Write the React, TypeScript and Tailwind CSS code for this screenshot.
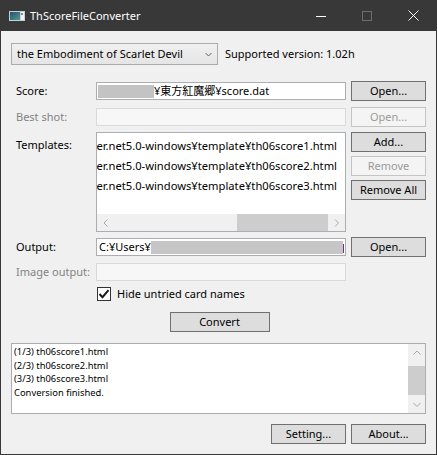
import React from "react";

type BtnProps = { children: React.ReactNode; disabled?: boolean; wide?: boolean };

function Btn({ children, disabled = false, wide = false }: BtnProps) {
  return (
    <div
      className={
        (wide ? "w-[100px] " : "w-[75px] ") +
        "h-[20px] shrink-0 flex items-center justify-center border " +
        (disabled
          ? "border-[#c4c4c4] bg-[#f4f4f4] text-[#9a9a9a]"
          : "border-[#707070] bg-[#dddddd] text-black")
      }
    >
      {children}
    </div>
  );
}

function Label({ children, disabled = false }: { children: React.ReactNode; disabled?: boolean }) {
  return (
    <div className={"w-[85px] shrink-0 pl-[5px] whitespace-nowrap " + (disabled ? "text-[#838383]" : "text-black")}>
      {children}
    </div>
  );
}

function Chevron({ dir, color = "#a8a8a8" }: { dir: "left" | "right" | "up" | "down"; color?: string }) {
  const pts =
    dir === "left"
      ? "4.5,0.5 1,4 4.5,7.5"
      : dir === "right"
      ? "1,0.5 4.5,4 1,7.5"
      : dir === "up"
      ? "0.5,4.5 4,1 7.5,4.5"
      : "0.5,1 4,4.5 7.5,1";
  const w = dir === "left" || dir === "right" ? 6 : 8;
  const h = dir === "left" || dir === "right" ? 8 : 6;
  return (
    <svg width={w} height={h} viewBox={`0 0 ${w} ${h}`}>
      <polyline points={pts} fill="none" stroke={color} strokeWidth="1" />
    </svg>
  );
}

const templates = [
  "er.net5.0-windows¥template¥th06score1.html",
  "er.net5.0-windows¥template¥th06score2.html",
  "er.net5.0-windows¥template¥th06score3.html",
];

const logLines = [
  "(1/3) th06score1.html",
  "(2/3) th06score2.html",
  "(3/3) th06score3.html",
  "Conversion finished.",
];

export default function App() {
  return (
    <div className="w-[437px] h-[455px] bg-[#383838] px-[1px] pb-[1px] flex flex-col font-['Noto_Sans','Noto_Sans_CJK_JP',sans-serif] text-[11px] leading-[16px] text-black overflow-hidden">
      {/* Title bar */}
      <div className="h-[31px] shrink-0 flex items-center">
        <div className="ml-[8px] w-[16px] h-[10px] mt-[1px]">
          <svg width="16" height="10" viewBox="0 0 16 10">
            <defs>
              <linearGradient id="ig" x1="0" y1="0" x2="1" y2="1">
                <stop offset="0" stopColor="#2b4f72" />
                <stop offset="1" stopColor="#4f9c8a" />
              </linearGradient>
            </defs>
            <rect x="0" y="0" width="16" height="10" fill="#c9cfd4" />
            <rect x="1" y="1" width="10" height="8" fill="url(#ig)" />
            <rect x="12" y="1" width="3" height="8" fill="#eef2f5" />
            <rect x="12" y="2" width="2" height="2" fill="#6b90a8" />
          </svg>
        </div>
        <div className="ml-[5px] text-white text-[11px] whitespace-nowrap">ThScoreFileConverter</div>
        <div className="ml-auto flex h-full">
          <div className="w-[46px] h-full flex items-center justify-center">
            <svg width="10" height="10" viewBox="0 0 10 10">
              <line x1="0" y1="5.5" x2="10" y2="5.5" stroke="#ffffff" strokeWidth="1" />
            </svg>
          </div>
          <div className="w-[46px] h-full flex items-center justify-center">
            <svg width="10" height="10" viewBox="0 0 10 10">
              <rect x="0.5" y="0.5" width="9" height="9" fill="none" stroke="#6e6e6e" strokeWidth="1" />
            </svg>
          </div>
          <div className="w-[46px] h-full flex items-center justify-center">
            <svg width="11" height="11" viewBox="0 0 11 11">
              <line x1="0.5" y1="0.5" x2="10.5" y2="10.5" stroke="#ffffff" strokeWidth="1" />
              <line x1="10.5" y1="0.5" x2="0.5" y2="10.5" stroke="#ffffff" strokeWidth="1" />
            </svg>
          </div>
        </div>
      </div>

      {/* Content */}
      <div className="flex-1 bg-[#f0f0f0] px-[10px] flex flex-col">
        {/* Game selector row */}
        <div className="mt-[12px] h-[22px] flex items-center">
          <div className="w-[207px] h-[22px] border border-[#acacac] bg-gradient-to-b from-[#f0f0f0] to-[#e5e5e5] flex items-center pl-[5px] pr-[5px]">
            <span className="whitespace-nowrap">the Embodiment of Scarlet Devil</span>
            <span className="ml-auto">
              <svg width="7" height="5" viewBox="0 0 7 5">
                <polyline points="0.5,1 3.5,4 6.5,1" fill="none" stroke="#606060" strokeWidth="1" />
              </svg>
            </span>
          </div>
          <div className="ml-[7px] whitespace-nowrap">Supported version: 1.02h</div>
        </div>

        {/* Score */}
        <div className="mt-[16px] h-[20px] flex items-center">
          <Label>Score:</Label>
          <div className="w-[250px] h-[18px] border border-[#abadb3] bg-white flex items-center pl-[1px] overflow-hidden whitespace-nowrap">
            <div className="w-[56px] h-[13px] bg-[#c3c3c3] shrink-0" />
            <span>¥東方紅魔郷¥score.dat</span>
          </div>
          <div className="ml-[5px]">
            <Btn>Open...</Btn>
          </div>
        </div>

        {/* Best shot */}
        <div className="mt-[6px] h-[20px] flex items-center">
          <Label disabled>Best shot:</Label>
          <div className="w-[250px] h-[18px] border border-[#d9d9d9] bg-[#f7f7f7]" />
          <div className="ml-[5px]">
            <Btn disabled>Open...</Btn>
          </div>
        </div>

        {/* Templates */}
        <div className="mt-[5px] h-[100px] flex items-start">
          <div className="w-[85px] shrink-0 pl-[5px] pt-[5px]">Templates:</div>
          <div className="w-[250px] h-[100px] border border-[#abadb3] bg-white flex flex-col">
            <div className="flex-1 pt-[3px] overflow-hidden text-[11.2px]">
              {templates.map((t) => (
                <div key={t} className="h-[20px] flex items-center justify-end pr-[8px] overflow-hidden">
                  <span className="shrink-0 whitespace-nowrap">{t}</span>
                </div>
              ))}
            </div>
            <div className="h-[17px] bg-[#f0f0f0] flex">
              <div className="w-[17px] h-full flex items-center justify-center">
                <Chevron dir="left" />
              </div>
              <div className="flex-1 flex justify-end">
                <div className="w-[91px] h-full bg-[#cdcdcd]" />
              </div>
              <div className="w-[17px] h-full flex items-center justify-center">
                <Chevron dir="right" />
              </div>
            </div>
          </div>
          <div className="ml-[5px] flex flex-col gap-[4px]">
            <Btn>Add...</Btn>
            <Btn disabled>Remove</Btn>
            <Btn>Remove All</Btn>
          </div>
        </div>

        {/* Output */}
        <div className="mt-[5px] h-[20px] flex items-center">
          <Label>Output:</Label>
          <div className="w-[250px] h-[18px] border border-[#abadb3] bg-white flex items-center pl-[2px] overflow-hidden whitespace-nowrap">
            <span>C:¥Users¥</span>
            <div className="w-[192px] h-[13px] bg-[#c6c6c6] shrink-0" />
            <div className="w-[1px] h-[9px] bg-[#7b2d8e] shrink-0 self-end mb-[2px]" />
          </div>
          <div className="ml-[5px]">
            <Btn>Open...</Btn>
          </div>
        </div>

        {/* Image output */}
        <div className="mt-[5px] h-[20px] flex items-center">
          <Label disabled>Image output:</Label>
          <div className="w-[250px] h-[18px] border border-[#d9d9d9] bg-[#f7f7f7]" />
        </div>

        {/* Checkbox */}
        <div className="mt-[4px] h-[16px] flex items-center pl-[86px]">
          <div className="w-[14px] h-[14px] border border-[#333333] bg-white flex items-center justify-center">
            <svg width="12" height="12" viewBox="0 0 12 12">
              <polyline points="1.5,6 4.5,9.2 10.5,2.2" fill="none" stroke="#1a1a1a" strokeWidth="2" />
            </svg>
          </div>
          <span className="ml-[6px] whitespace-nowrap">Hide untried card names</span>
        </div>

        {/* Convert */}
        <div className="mt-[10px] h-[20px] flex justify-center pl-[2px]">
          <Btn wide>Convert</Btn>
        </div>

        {/* Log */}
        <div className="mt-[11px] h-[71px] border border-[#abadb3] bg-white flex">
          <div className="flex-1 pl-[2px] pt-[1px] text-[9.4px] leading-[13.5px] overflow-hidden">
            {logLines.map((l) => (
              <div key={l} className="whitespace-nowrap">{l}</div>
            ))}
          </div>
          <div className="w-[17px] bg-[#f0f0f0] flex flex-col">
            <div className="h-[17px] flex items-center justify-center">
              <Chevron dir="up" />
            </div>
            <div className="flex-1">
              <div className="mt-[5px] h-[29px] bg-[#cdcdcd]" />
            </div>
            <div className="h-[17px] flex items-center justify-center">
              <Chevron dir="down" />
            </div>
          </div>
        </div>

        {/* Bottom buttons */}
        <div className="mt-[10px] h-[20px] flex justify-end gap-[5px]">
          <Btn>Setting...</Btn>
          <Btn>About...</Btn>
        </div>
      </div>
    </div>
  );
}
